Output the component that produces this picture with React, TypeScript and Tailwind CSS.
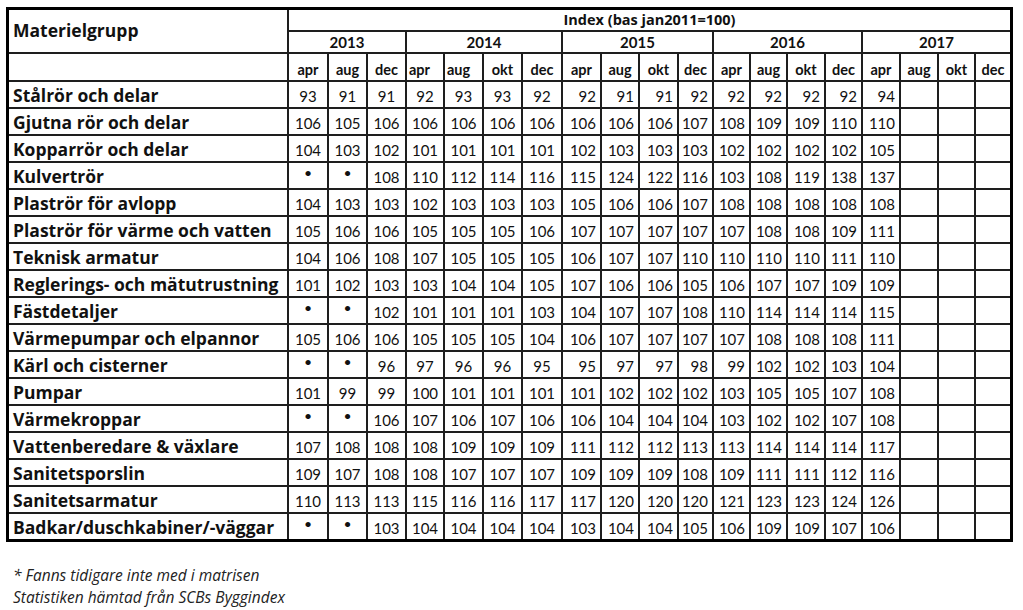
import React from "react";

type Row = { label: string; v: (number | null)[] };

const rows: Row[] = [
  { label: "Stålrör och delar", v: [93, 91, 91, 92, 93, 93, 92, 92, 91, 91, 92, 92, 92, 92, 92, 94] },
  { label: "Gjutna rör och delar", v: [106, 105, 106, 106, 106, 106, 106, 106, 106, 106, 107, 108, 109, 109, 110, 110] },
  { label: "Kopparrör och delar", v: [104, 103, 102, 101, 101, 101, 101, 102, 103, 103, 103, 102, 102, 102, 102, 105] },
  { label: "Kulvertrör", v: [null, null, 108, 110, 112, 114, 116, 115, 124, 122, 116, 103, 108, 119, 138, 137] },
  { label: "Plaströr för avlopp", v: [104, 103, 103, 102, 103, 103, 103, 105, 106, 106, 107, 108, 108, 108, 108, 108] },
  { label: "Plaströr för värme och vatten", v: [105, 106, 106, 105, 105, 105, 106, 107, 107, 107, 107, 107, 108, 108, 109, 111] },
  { label: "Teknisk armatur", v: [104, 106, 108, 107, 105, 105, 105, 106, 107, 107, 110, 110, 110, 110, 111, 110] },
  { label: "Reglerings- och mätutrustning", v: [101, 102, 103, 103, 104, 104, 105, 107, 106, 106, 105, 106, 107, 107, 109, 109] },
  { label: "Fästdetaljer", v: [null, null, 102, 101, 101, 101, 103, 104, 107, 107, 108, 110, 114, 114, 114, 115] },
  { label: "Värmepumpar och elpannor", v: [105, 106, 106, 105, 105, 105, 104, 106, 107, 107, 107, 107, 108, 108, 108, 111] },
  { label: "Kärl och cisterner", v: [null, null, 96, 97, 96, 96, 95, 95, 97, 97, 98, 99, 102, 102, 103, 104] },
  { label: "Pumpar", v: [101, 99, 99, 100, 101, 101, 101, 101, 102, 102, 102, 103, 105, 105, 107, 108] },
  { label: "Värmekroppar", v: [null, null, 106, 107, 106, 107, 106, 106, 104, 104, 104, 103, 102, 102, 107, 108] },
  { label: "Vattenberedare & växlare", v: [107, 108, 108, 108, 109, 109, 109, 111, 112, 112, 113, 113, 114, 114, 114, 117] },
  { label: "Sanitetsporslin", v: [109, 107, 108, 108, 107, 107, 107, 109, 109, 109, 108, 109, 111, 111, 112, 116] },
  { label: "Sanitetsarmatur", v: [110, 113, 113, 115, 116, 116, 117, 117, 120, 120, 120, 121, 123, 123, 124, 126] },
  { label: "Badkar/duschkabiner/-väggar", v: [null, null, 103, 104, 104, 104, 104, 103, 104, 104, 105, 106, 109, 109, 107, 106] },
];

const months = ["apr", "aug", "dec", "apr", "aug", "okt", "dec", "apr", "aug", "okt", "dec", "apr", "aug", "okt", "dec", "apr", "aug", "okt", "dec"];

const lato = { fontFamily: "Lato, 'Open Sans', sans-serif" };
const open = { fontFamily: "'Open Sans', Lato, sans-serif" };

export default function App() {
  return (
    <div className="w-[1023px] h-[610px] bg-white pt-[7px] pl-[6px] text-[#111]" style={lato}>
      <div className="inline-grid border-[3px] border-black bg-[#1e1e1e] gap-[2px] grid-cols-[278px_38px_37px_37px_36px_37px_37px_38px_37px_36px_37px_33px_35px_35px_36px_35px_36px_36px_35px_34px] grid-rows-[20px_20px_26px_repeat(17,25px)]">
        <div className="row-span-2 bg-white pl-[4px] pt-[12px] text-[17.5px] font-bold leading-none" style={open}>Materielgrupp</div>
        <div className="col-span-19 bg-white flex items-end justify-center pb-[3px] text-[14.5px] font-bold leading-none" style={open}>Index (bas jan2011=100)</div>
        <div className="col-span-3 bg-white flex items-end justify-center pb-[2px] text-[15px] font-bold leading-none">2013</div>
        <div className="col-span-4 bg-white flex items-end justify-center pb-[2px] text-[15px] font-bold leading-none">2014</div>
        <div className="col-span-4 bg-white flex items-end justify-center pb-[2px] text-[15px] font-bold leading-none">2015</div>
        <div className="col-span-4 bg-white flex items-end justify-center pb-[2px] text-[15px] font-bold leading-none">2016</div>
        <div className="col-span-4 bg-white flex items-end justify-center pb-[2px] text-[15px] font-bold leading-none">2017</div>
        <div className="bg-white"></div>
        {months.map((m, i) => (
          <div
            key={i}
            className={
              "bg-white flex items-end pb-[3px] text-[14.5px] font-bold leading-none " +
              (i === 3 || i === 4 ? "justify-start pl-[2px]" : "justify-center")
            }
          >
            {m}
          </div>
        ))}
        {rows.map((r) => (
          <React.Fragment key={r.label}>
            <div className="bg-white flex items-end pl-[4px] pb-[3px] text-[17.5px] font-bold leading-none whitespace-nowrap" style={open}>{r.label}</div>
            {Array.from({ length: 19 }).map((_, i) => {
              const val = r.v[i];
              if (val === undefined) return <div key={i} className="bg-white"></div>;
              if (val === null)
                return (
                  <div key={i} className="bg-white flex items-start justify-center pt-[3px] text-[14px] leading-none">
                    •
                  </div>
                );
              return (
                <div
                  key={i}
                  className={
                    "bg-white flex items-end pb-[3px] text-[15px] leading-none " +
                    (i < 7 ? "justify-center" : "justify-end pr-[4px]")
                  }
                >
                  {val}
                </div>
              );
            })}
          </React.Fragment>
        ))}
      </div>
      <div className="mt-[22px] ml-[7px] italic text-[15.5px] leading-[22px] text-[#222]" style={open}>
        <div>* Fanns tidigare inte med i matrisen</div>
        <div>Statistiken hämtad från SCBs Byggindex</div>
      </div>
    </div>
  );
}
